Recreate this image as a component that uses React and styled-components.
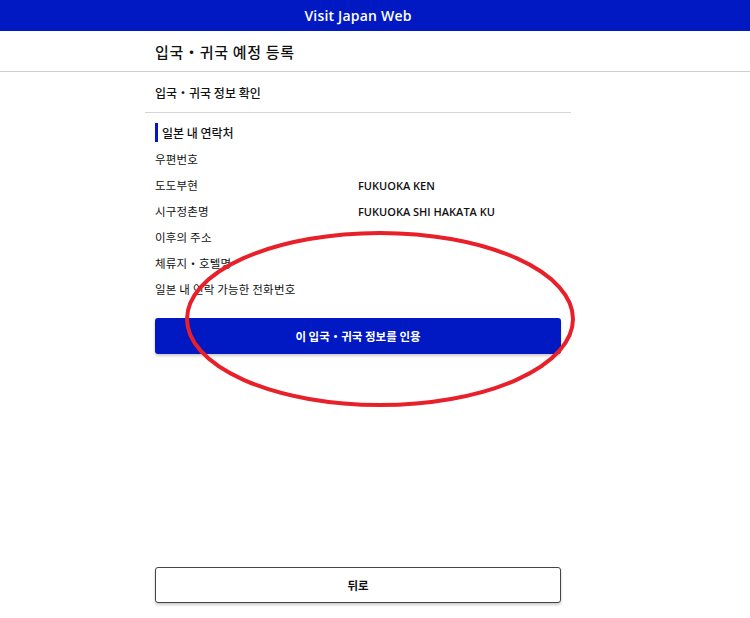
import React from 'react';
import styled, { createGlobalStyle } from 'styled-components';

const GlobalStyle = createGlobalStyle`
  body {
    margin: 0;
    background: #fff;
    font-family: "Noto Sans CJK KR", "Noto Sans", sans-serif;
    color: #111;
  }
`;

const Page = styled.div`
  position: relative;
  width: 750px;
  height: 618px;
  overflow: hidden;
`;

const Header = styled.header`
  height: 31px;
  padding-right: 34px;
  background: #0019c2;
  color: #fff;
  display: flex;
  align-items: center;
  justify-content: center;
  font-family: "Open Sans", "Noto Sans", sans-serif;
  font-weight: 600;
  font-size: 14px;
  letter-spacing: 0.2px;
`;

const PageTitle = styled.h1`
  margin: 0;
  height: 40px;
  padding-left: 155px;
  display: flex;
  align-items: center;
  font-size: 15px;
  font-weight: 500;
  letter-spacing: 0.7px;
  border-bottom: 1px solid #cfcfcf;
`;

const Column = styled.main`
  margin-left: 145px;
  width: 426px;
`;

const SubTitle = styled.h2`
  margin: 0;
  height: 40px;
  padding-left: 10px;
  display: flex;
  align-items: center;
  font-size: 12px;
  font-weight: 500;
  border-bottom: 1px solid #d6d6d6;
`;

const Section = styled.section`
  padding-left: 10px;
`;

const SectionHead = styled.h3`
  margin: 10px 0 4px;
  height: 19px;
  border-left: 3px solid #0019c2;
  padding-left: 4px;
  display: flex;
  align-items: center;
  font-size: 12px;
  font-weight: 500;
`;

const Row = styled.div`
  display: grid;
  grid-template-columns: 203px 1fr;
  height: 26px;
  align-items: center;
  font-size: 11.5px;
  letter-spacing: 0.2px;
`;

const Value = styled.span`
  font-family: "Open Sans", "Noto Sans", sans-serif;
  font-weight: 600;
  font-size: 11px;
  letter-spacing: 0;
`;

const Button = styled.button`
  display: block;
  width: 406px;
  height: 36px;
  border-radius: 3px;
  font-family: "Noto Sans CJK KR", sans-serif;
  font-size: 11.5px;
  font-weight: 700;
  cursor: pointer;
  box-shadow: 0 2px 3px rgba(0, 0, 0, 0.2);
  border: ${p => (p.$outline ? '1px solid #444' : 'none')};
  background: ${p => (p.$outline ? '#fff' : '#0019c2')};
  color: ${p => (p.$outline ? '#111' : '#fff')};
  margin-top: ${p => p.$top || 0}px;
`;

const Mark = styled.svg`
  position: absolute;
  left: 0;
  top: 0;
  pointer-events: none;
`;

const rows = [
  ['우편번호', ''],
  ['도도부현', 'FUKUOKA KEN'],
  ['시구정촌명', 'FUKUOKA SHI HAKATA KU'],
  ['이후의 주소', ''],
  ['체류지・호텔명', ''],
  ['일본 내 연락 가능한 전화번호', ''],
];

export default function App() {
  return (
    <Page>
      <GlobalStyle />
      <Header>Visit Japan Web</Header>
      <PageTitle>입국・귀국 예정 등록</PageTitle>
      <Column>
        <SubTitle>입국・귀국 정보 확인</SubTitle>
        <Section>
          <SectionHead>일본 내 연락처</SectionHead>
          {rows.map(([label, value]) => (
            <Row key={label}>
              <span>{label}</span>
              <Value>{value}</Value>
            </Row>
          ))}
          <Button $top={16}>이 입국・귀국 정보를 인용</Button>
          <Button $outline $top={213}>뒤로</Button>
        </Section>
      </Column>
      <Mark width="750" height="618">
        <ellipse cx="380" cy="319" rx="193" ry="86" fill="none" stroke="#e8202a" strokeWidth="4" />
      </Mark>
    </Page>
  );
}
